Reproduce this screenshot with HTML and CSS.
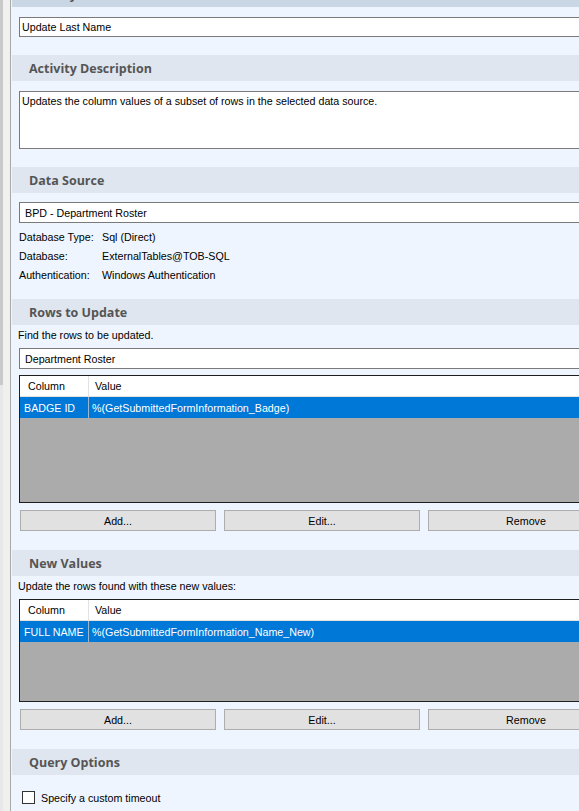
FILE: index.html
```html
<!DOCTYPE html>
<html>
<head>
<meta charset="utf-8">
<link rel="stylesheet" href="styles.css">
</head>
<body>
<div class="frame">
  <div class="strip"></div>
  <div class="panel">
    <div class="sec-head first">Activity Name</div>
    <div class="sec-body s1">
      <div class="field">Update Last Name</div>
    </div>

    <div class="sec-head">Activity Description</div>
    <div class="sec-body s2">
      <div class="field area">Updates the column values of a subset of rows in the selected data source.</div>
    </div>

    <div class="sec-head">Data Source</div>
    <div class="sec-body s3">
      <div class="field ds">BPD - Department Roster</div>
      <div class="info">
        <div class="info-row"><span class="lbl">Database Type:</span><span>Sql (Direct)</span></div>
        <div class="info-row"><span class="lbl">Database:</span><span>ExternalTables@TOB-SQL</span></div>
        <div class="info-row"><span class="lbl">Authentication:</span><span>Windows Authentication</span></div>
      </div>
    </div>

    <div class="sec-head">Rows to Update</div>
    <div class="sec-body s4">
      <div class="hint">Find the rows to be updated.</div>
      <div class="field ds2">Department Roster</div>
      <div class="grid g1">
        <div class="g-head"><div class="c1">Column</div><div class="c2">Value</div></div>
        <div class="g-row"><div class="c1">BADGE ID</div><div class="c2">%(GetSubmittedFormInformation_Badge)</div></div>
      </div>
      <div class="btns">
        <div class="btn">Add...</div>
        <div class="btn">Edit...</div>
        <div class="btn">Remove</div>
      </div>
    </div>

    <div class="sec-head">New Values</div>
    <div class="sec-body s5">
      <div class="hint">Update the rows found with these new values:</div>
      <div class="grid g2">
        <div class="g-head"><div class="c1">Column</div><div class="c2">Value</div></div>
        <div class="g-row"><div class="c1">FULL NAME</div><div class="c2">%(GetSubmittedFormInformation_Name_New)</div></div>
      </div>
      <div class="btns">
        <div class="btn">Add...</div>
        <div class="btn">Edit...</div>
        <div class="btn">Remove</div>
      </div>
    </div>

    <div class="sec-head">Query Options</div>
    <div class="sec-body s6">
      <label class="check"><span class="box"></span><span>Specify a custom timeout</span></label>
    </div>
  </div>
</div>
</body>
</html>
```

FILE: styles.css
```css
html, body {
  margin: 0;
  padding: 0;
  width: 579px;
  height: 811px;
  overflow: hidden;
  background: #eef5fe;
}

.frame {
  display: flex;
  width: 660px;
  height: 811px;
  font-family: "Liberation Sans", Arial, sans-serif;
  font-size: 10.7px;
  color: #000;
  white-space: nowrap;
}

.strip {
  width: 3px;
  flex: none;
  border-right: 7px solid #f0f0f0;
  background: linear-gradient(to bottom, #c9c9c9 0, #c9c9c9 385px, #e8e8e8 385px);
}

.panel {
  flex: 1;
  border-left: 1px solid #a9a9a9;
  background: #eef5fe;
}

.sec-head {
  height: 26px;
  line-height: 27px;
  padding-left: 17px;
  background: #dfe6ef;
  color: #555;
  font-family: "Open Sans", "Noto Sans", sans-serif;
  font-weight: 700;
  font-size: 12.5px;
  margin-left: 1px;
}

.sec-head.first {
  margin-top: -19px;
  background: #c9d6e4;
}

.sec-body {
  padding-left: 8px;
}

.s1 { padding-top: 10px; padding-bottom: 18px; }
.s2 { padding-top: 10px; padding-bottom: 18px; }
.s3 { padding-top: 9px; padding-bottom: 14px; }
.s4 { padding-top: 1px; padding-bottom: 19px; }
.s5 { padding-top: 1px; padding-bottom: 19px; }
.s6 { padding-top: 16px; }

.field {
  height: 18px;
  line-height: 19px;
  border: 1px solid #7a7a7a;
  border-right: none;
  background: #fff;
  padding-left: 2px;
}

.field.area {
  height: 55px;
  line-height: 16px;
  padding-top: 1px;
}

.field.ds, .field.ds2 {
  height: 19px;
  line-height: 20px;
  padding-left: 5px;
}

.field.ds2 {
  margin-top: 3px;
}

.info {
  padding-top: 5px;
}

.info-row {
  display: flex;
  height: 19px;
  line-height: 19px;
}

.lbl {
  width: 83px;
  flex: none;
}

.hint {
  height: 19px;
  line-height: 19px;
  margin-left: -1px;
}

.grid {
  margin-top: 6px;
  border: 1px solid #1e1e1e;
  border-right: none;
  background: #ababab;
}

.g1 { height: 126px; }
.g2 { height: 101px; margin-top: 3px; }

.g-head, .g-row {
  display: flex;
}

.g-head {
  height: 20px;
  line-height: 21px;
  background: #fff;
  border-bottom: 1px solid #e2e2e2;
}

.g-row {
  height: 21px;
  line-height: 22px;
  background: #0078d7;
  color: #fff;
}

.c1 {
  width: 69px;
  flex: none;
  padding-left: 4px;
  box-sizing: border-box;
  border-right: 1px solid #e2e2e2;
}

.g-row .c1 {
  border-right-color: #9ab7d3;
}

.c2 {
  padding-left: 3px;
}

.g-head .c1 { padding-left: 8px; }
.g-head .c2 { padding-left: 6px; }

.btns {
  display: flex;
  gap: 8px;
  margin-top: 7px;
  padding-left: 1px;
}

.btn {
  width: 194px;
  height: 19px;
  line-height: 20px;
  flex: none;
  text-align: center;
  background: #e1e1e1;
  border: 1px solid #adadad;
}

.check {
  display: flex;
  align-items: center;
  gap: 6px;
  padding-left: 3px;
}

.box {
  width: 11px;
  height: 11px;
  border: 1px solid #333;
  background: #fff;
}
```
